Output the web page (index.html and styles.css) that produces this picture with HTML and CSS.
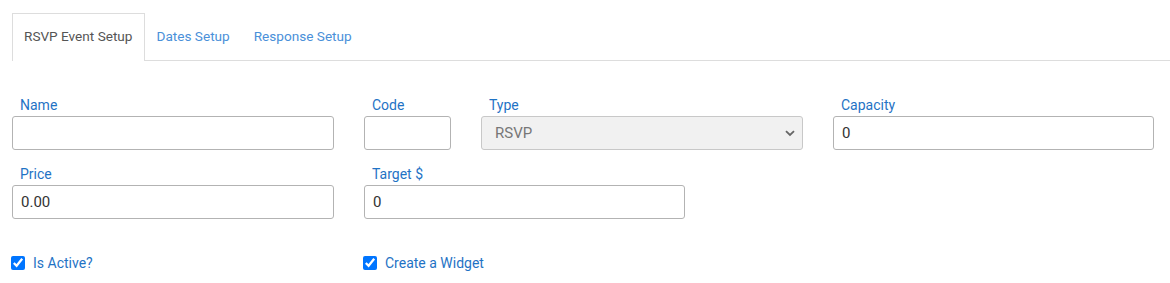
FILE: index.html
```html
<!DOCTYPE html>
<html>
<head>
<meta charset="utf-8">
<link rel="stylesheet" href="styles.css">
</head>
<body>
<div class="page">
  <ul class="tabs">
    <li class="tab active">RSVP Event Setup</li>
    <li class="tab">Dates Setup</li>
    <li class="tab">Response Setup</li>
  </ul>
  <form class="form">
    <div class="row">
      <div class="field w-lg">
        <label class="lbl">Name</label>
        <input class="inp" type="text" value="">
      </div>
      <div class="field w-sm">
        <label class="lbl">Code</label>
        <input class="inp" type="text" value="">
      </div>
      <div class="field w-lg">
        <label class="lbl">Type</label>
        <div class="select">
          <span>RSVP</span>
          <svg width="10" height="7" viewBox="0 0 10 7"><path d="M1 1.2 L5 5 L9 1.2" fill="none" stroke="#666" stroke-width="1.8"/></svg>
        </div>
      </div>
      <div class="field w-lg2">
        <label class="lbl">Capacity</label>
        <input class="inp" type="text" value="0">
      </div>
    </div>
    <div class="row">
      <div class="field w-lg">
        <label class="lbl">Price</label>
        <input class="inp" type="text" value="0.00">
      </div>
      <div class="field w-md">
        <label class="lbl">Target $</label>
        <input class="inp" type="text" value="0">
      </div>
    </div>
    <div class="checks">
      <label class="chk"><input type="checkbox" checked><span>Is Active?</span></label>
      <label class="chk"><input type="checkbox" checked><span>Create a Widget</span></label>
    </div>
  </form>
</div>
</body>
</html>
```

FILE: styles.css
```css
html, body {
  margin: 0;
  padding: 0;
  background: #fff;
}
body {
  font-family: Roboto, "Liberation Sans", sans-serif;
  font-size: 14px;
  color: #333;
}
.page {
  padding-top: 13px;
}
.tabs {
  list-style: none;
  margin: 0 0 0 12px;
  padding: 0;
  display: flex;
  border-bottom: 1px solid #ddd;
  font-size: 13.6px;
}
.tab {
  height: 44px;
  line-height: 44px;
  padding: 0 11px 2px;
  color: #4a90d9;
  border: 1px solid transparent;
  border-bottom: none;
  margin-bottom: -1px;
  box-sizing: content-box;
}
.tab.active {
  color: #555;
  border-color: #ddd;
  background: #fff;
  height: 45px;
}
.form {
  padding: 36px 0 0 12px;
}
.row {
  display: flex;
  gap: 30px;
  margin-bottom: 16px;
}
.field {
  display: flex;
  flex-direction: column;
}
.w-lg { width: 322px; }
.w-lg2 { width: 321px; }
.w-sm { width: 87px; }
.w-md { width: 321px; }
.lbl {
  color: #1f73c5;
  line-height: 17px;
  padding-left: 8px;
  margin-bottom: 2px;
}
.inp {
  box-sizing: border-box;
  height: 34px;
  width: 100%;
  border: 1px solid #b3b3b3;
  border-radius: 3px;
  padding: 0 8px;
  font-family: Roboto, "Liberation Sans", sans-serif;
  font-size: 15px;
  color: #333;
  outline: none;
  margin: 0;
}
.select {
  box-sizing: border-box;
  height: 34px;
  width: 100%;
  border: 1px solid #c8c8c8;
  border-radius: 3px;
  background: #f1f1f1;
  padding: 0 7px 0 13px;
  display: flex;
  align-items: center;
  justify-content: space-between;
  font-size: 15px;
  color: #777;
}
.checks {
  display: flex;
  padding-top: 20px;
}
.chk {
  display: flex;
  align-items: center;
  width: 352px;
  color: #1f73c5;
}
.chk input {
  margin: 0 8px 0 -1px;
  width: 14px;
  height: 14px;
  accent-color: #0075ff;
}
```
